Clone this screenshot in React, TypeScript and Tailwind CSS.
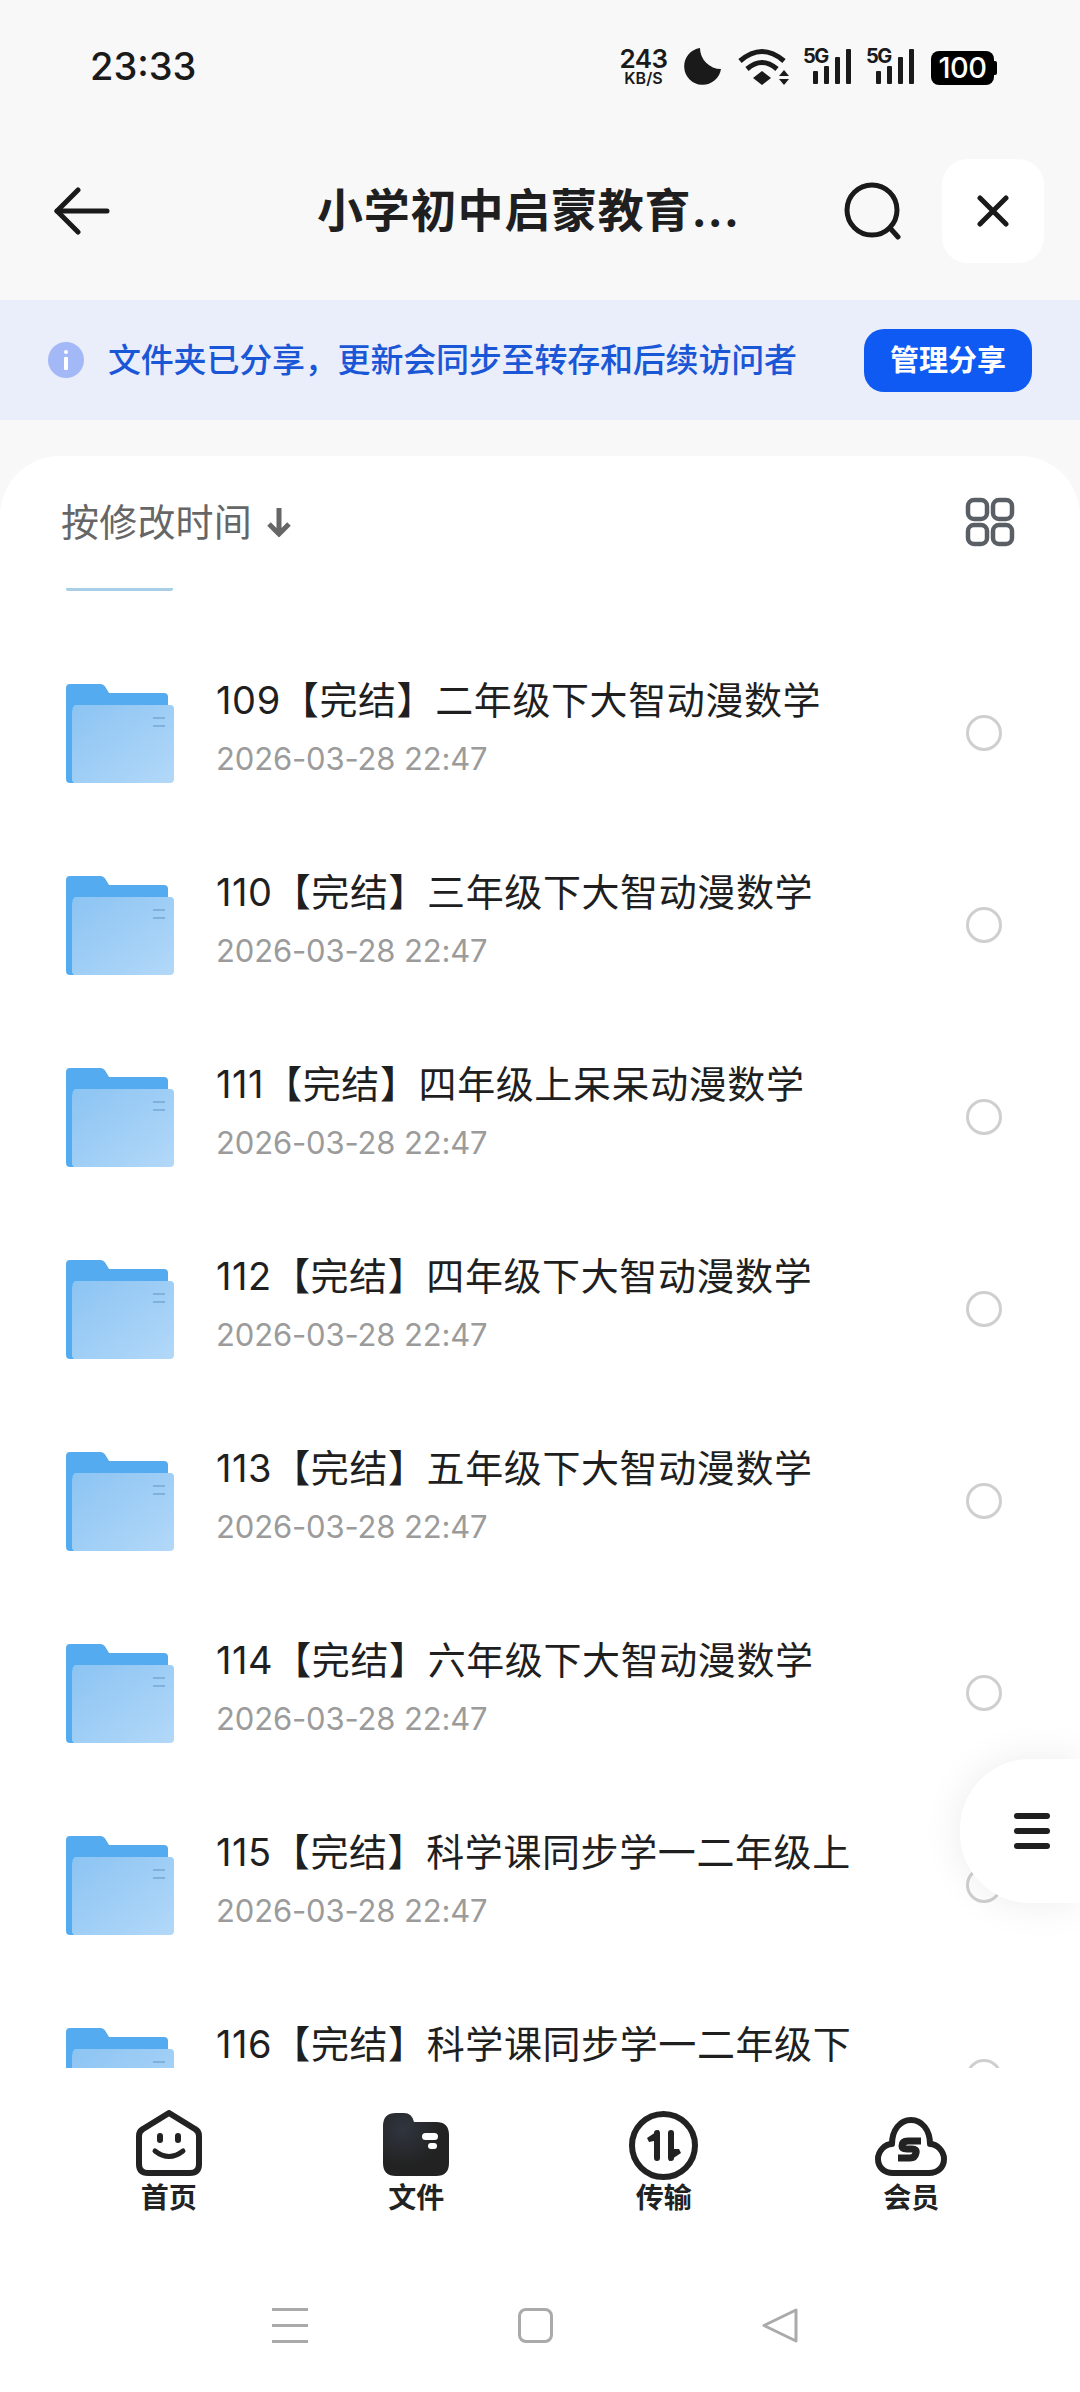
const rows = [
  { title: "109【完结】二年级下大智动漫数学" },
  { title: "110【完结】三年级下大智动漫数学" },
  { title: "111【完结】四年级上呆呆动漫数学" },
  { title: "112【完结】四年级下大智动漫数学" },
  { title: "113【完结】五年级下大智动漫数学" },
  { title: "114【完结】六年级下大智动漫数学" },
  { title: "115【完结】科学课同步学一二年级上" },
  { title: "116【完结】科学课同步学一二年级下" },
]

function FolderIcon({ id }: { id: number }) {
  return (
    <svg width="108" height="100" viewBox="0 0 108 100" className="shrink-0">
      <defs>
        <linearGradient id={`front-${id}`} x1="0" y1="0" x2="1" y2="1">
          <stop offset="0" stopColor="#8cc4f3" />
          <stop offset="1" stopColor="#b2d8f8" />
        </linearGradient>
      </defs>
      <path d="M4 0H34Q38 0 40 4L43 9H98Q102 9 102 13V30H8V99H4Q0 99 0 95V4Q0 0 4 0Z" fill="#55abf0" />
      <path d="M6 30Q6 21 10 21H104Q108 21 108 25V95Q108 99 104 99H10Q6 99 6 95Z" fill={`url(#front-${id})`} />
      <rect x="87" y="33" width="12" height="2" fill="#7fb0de" />
      <rect x="87" y="41" width="12" height="2" fill="#7fb0de" />
    </svg>
  )
}

function SignalIcon() {
  return (
    <div className="relative w-[48px] h-[37px]">
      <svg width="48" height="37" viewBox="0 0 48 37">
        <rect x="10" y="23" width="5" height="13" rx="1" fill="#1a1a1a" />
        <rect x="21" y="18" width="5" height="18" rx="1" fill="#1a1a1a" />
        <rect x="32" y="9" width="5" height="27" rx="1" fill="#1a1a1a" />
        <rect x="43" y="1" width="5" height="35" rx="1" fill="#1a1a1a" />
      </svg>
      <span className="absolute left-0 top-0 text-[20px] leading-[17px] font-bold tracking-[-1.5px] text-[#1a1a1a]">5G</span>
    </div>
  )
}

function StatusBar() {
  return (
    <div className="h-[130px] shrink-0 flex items-start justify-between pl-[90px] pr-[83px] pt-[48px] text-[#1a1a1a]">
      <span className="text-[38px] leading-[37px] font-medium">23:33</span>
      <div className="flex items-start">
        <div className="w-[47px] flex flex-col items-center font-semibold">
          <span className="text-[26px] leading-[22px] tracking-[-0.5px]">243</span>
          <span className="text-[16px] leading-[15px] mt-[1px]">KB/S</span>
        </div>
        <svg width="37" height="37" viewBox="0 0 37 37" className="ml-[17px]">
          <path d="M16 0A18.5 18.5 0 1 0 37 21A21 21 0 0 1 16 0Z" fill="#1a1a1a" />
        </svg>
        <svg width="51" height="37" viewBox="0 0 51 37" className="ml-[17px]" fill="none" stroke="#1a1a1a" strokeWidth="5">
          <path d="M2 13Q24 -6 46 13" />
          <path d="M9 21Q24 8 39 21" />
          <path d="M24 23L33 30L24 37L15 30Z" fill="#1a1a1a" stroke="none" />
          <path d="M46 22L51 28H41Z" fill="#1a1a1a" stroke="none" />
          <path d="M41 31H51L46 37Z" fill="#1a1a1a" stroke="none" />
        </svg>
        <div className="ml-[14px]"><SignalIcon /></div>
        <div className="ml-[15px]"><SignalIcon /></div>
        <div className="ml-[17px] mt-[3px] flex items-center">
          <div className="w-[63px] h-[34px] rounded-[8px] bg-black text-white text-[29px] leading-[34px] font-medium text-center tracking-[-0.5px]">100</div>
          <div className="w-[3px] h-[14px] rounded-r-[2px] bg-black" />
        </div>
      </div>
    </div>
  )
}

function Header() {
  return (
    <div className="h-[170px] shrink-0 flex items-center pl-[54px] pr-[36px] pb-[8px]">
      <svg width="56" height="48" viewBox="0 0 56 48" fill="none" stroke="#1a1a1a" strokeWidth="5" strokeLinecap="round" strokeLinejoin="round">
        <path d="M24 3L3 24L24 45" />
        <path d="M3 24H53" />
      </svg>
      <div className="ml-[207px] w-[430px] -mt-[2px] text-[46px] leading-[60px] font-bold text-[#1f1f1f] tracking-[0.8px] whitespace-nowrap">小学初中启蒙教育...</div>
      <svg width="58" height="58" viewBox="0 0 58 58" fill="none" stroke="#1a1a1a" strokeWidth="5" strokeLinecap="round" className="ml-[97px]">
        <circle cx="28" cy="28" r="25" />
        <path d="M46 46L54 55" />
      </svg>
      <div className="ml-[40px] w-[102px] h-[104px] rounded-[26px] bg-white flex items-center justify-center">
        <svg width="32" height="32" viewBox="0 0 32 32" fill="none" stroke="#1a1a1a" strokeWidth="5" strokeLinecap="round">
          <path d="M3 3L29 29M29 3L3 29" />
        </svg>
      </div>
    </div>
  )
}

function ShareBanner() {
  return (
    <div className="h-[120px] shrink-0 bg-[#eaeefb] flex items-center pl-[48px] pr-[48px]">
      <div className="w-[36px] h-[36px] rounded-full bg-[#a3b8f6] flex flex-col items-center justify-center gap-[3px]">
        <span className="w-[4px] h-[4px] bg-white rounded-full" />
        <span className="w-[4px] h-[13px] bg-white rounded-[1px]" />
      </div>
      <span className="ml-[24px] text-[33px] leading-[44px] font-medium tracking-[-0.2px] text-[#1a57d6] whitespace-nowrap">文件夹已分享，更新会同步至转存和后续访问者</span>
      <div className="ml-auto w-[168px] h-[63px] rounded-[20px] bg-[#0e5af2] text-white text-[29px] leading-[63px] font-bold text-center">管理分享</div>
    </div>
  )
}

function FileRow({ title, id }: { title: string; id: number }) {
  return (
    <div className="h-[192px] shrink-0 flex items-center pl-[66px] pr-[78px]">
      <FolderIcon id={id} />
      <div className="ml-[42px] flex-1 min-w-0 -mt-[13px]">
        <div className="text-[38px] leading-[50px] text-[#1f1f1f] whitespace-nowrap tracking-[0.6px]">{title}</div>
        <div className="mt-[13px] text-[31px] leading-[42px] tracking-[-0.15px] text-[#9b9b9b]">2026-03-28 22:47</div>
      </div>
      <div className="w-[36px] h-[36px] -mt-[3px] rounded-full border-[3px] border-[#cfcfcf] shrink-0" />
    </div>
  )
}

function HomeIcon() {
  return (
    <svg width="66" height="66" viewBox="0 0 66 66" fill="none" stroke="#222" strokeWidth="6" strokeLinecap="round" strokeLinejoin="round">
      <path d="M33 3L59 19Q63 21 63 26V54Q63 63 54 63H12Q3 63 3 54V26Q3 21 7 19Z" />
      <path d="M24 26V30M42 26V30" />
      <path d="M19 41Q33 52 47 41" strokeWidth="5" />
    </svg>
  )
}

function FilesIcon() {
  return (
    <svg width="66" height="63" viewBox="0 0 66 63">
      <defs>
        <radialGradient id="files-shine" cx="0.3" cy="0.25" r="0.6">
          <stop offset="0" stopColor="#30353f" />
          <stop offset="1" stopColor="#222222" />
        </radialGradient>
      </defs>
      <path d="M13 0H21Q29 0 31 9H53Q66 9 66 22V50Q66 63 53 63H13Q0 63 0 50V13Q0 0 13 0Z" fill="url(#files-shine)" />
      <rect x="39" y="20" width="16" height="7" rx="3.5" fill="#fff" />
      <rect x="45" y="30" width="9" height="6" rx="3" fill="#fff" />
    </svg>
  )
}

function TransferIcon() {
  return (
    <svg width="69" height="69" viewBox="0 0 69 69" fill="none" stroke="#222" className="-mb-[4px]">
      <circle cx="34.5" cy="34.5" r="31.5" strokeWidth="6" />
      <path d="M28 22V47M42 22V47" strokeWidth="6" strokeLinecap="round" />
      <path d="M30 19L18 27L20 31L30 29Z" fill="#222" stroke="none" />
      <path d="M40 50L52 42L50 38L40 38Z" fill="#222" stroke="none" />
    </svg>
  )
}

function CloudIcon() {
  return (
    <svg width="72" height="59" viewBox="0 0 72 59" fill="none" stroke="#222" strokeWidth="6" strokeLinejoin="round">
      <path d="M18 56H54C63 56 69 50 69 42C69 34 62 27 55 27C55 13 47 3 36 3C25 3 17 13 17 27C10 27 3 34 3 42C3 50 9 56 18 56Z" />
      <path d="M46 24H33Q27 24 27 29Q27 32 32 32H37Q42 32 41 36Q40 41 35 41H23" strokeWidth="7" />
    </svg>
  )
}

const tabs = [
  { label: "首页", icon: <HomeIcon /> },
  { label: "文件", icon: <FilesIcon /> },
  { label: "传输", icon: <TransferIcon /> },
  { label: "会员", icon: <CloudIcon /> },
]

function BottomTabs() {
  return (
    <div className="shrink-0 grid grid-cols-4 px-[45px] pt-[38px] bg-white">
      {tabs.map((tab) => (
        <div key={tab.label} className="flex flex-col items-center">
          <div className="h-[70px] flex items-end justify-center">{tab.icon}</div>
          <span className="mt-[8px] text-[28px] leading-[28px] font-semibold text-[#222]">{tab.label}</span>
        </div>
      ))}
    </div>
  )
}

function SystemNav() {
  return (
    <div className="shrink-0 flex items-start pl-[272px] pt-[96px] h-[180px] bg-white">
      <div className="w-[36px] h-[35px] flex flex-col justify-between">
        <div className="h-[3px] bg-[#aaaaaa]" />
        <div className="h-[3px] bg-[#aaaaaa]" />
        <div className="h-[3px] bg-[#aaaaaa]" />
      </div>
      <div className="ml-[210px] w-[35px] h-[35px] rounded-[8px] border-[3px] border-[#aaaaaa]" />
      <svg width="36" height="35" viewBox="0 0 36 35" fill="none" stroke="#aaaaaa" strokeWidth="3" strokeLinejoin="round" className="ml-[209px]">
        <path d="M34 2V33L2 17.5Z" />
      </svg>
    </div>
  )
}

export default function App() {
  return (
    <div className="relative w-[1080px] h-[2392px] overflow-hidden flex flex-col bg-[#f8f8f8] font-['Inter','Noto_Sans_CJK_SC',sans-serif]">
      <StatusBar />
      <Header />
      <ShareBanner />

      {/* sheet */}
      <div className="mt-[36px] flex-1 min-h-0 flex flex-col bg-white rounded-t-[60px]">
        <div className="h-[114px] shrink-0 flex items-center pl-[61px] pr-[65px] pt-[18px]">
          <span className="text-[38px] leading-[50px] tracking-[0.2px] text-[#666666]">按修改时间</span>
          <svg width="28" height="30" viewBox="0 0 28 30" fill="none" stroke="#666666" strokeWidth="5" className="ml-[13px]">
            <path d="M14 1V27M4 17L14 27L24 17" />
          </svg>
          <svg width="50" height="50" viewBox="0 0 50 50" fill="none" stroke="#5a5f66" strokeWidth="4.5" className="ml-auto">
            <rect x="3" y="3" width="19" height="19" rx="6" />
            <rect x="28" y="3" width="19" height="19" rx="6" />
            <rect x="3" y="28" width="19" height="19" rx="6" />
            <rect x="28" y="28" width="19" height="19" rx="6" />
          </svg>
        </div>

        <div className="flex-1 min-h-0 overflow-hidden flex flex-col">
          <div className="ml-[66px] mt-[18px] mb-[47px] w-[107px] h-[3px] shrink-0 bg-[#a9cfe8] rounded-b-[2px]" />
          {rows.map((row, index) => (
            <FileRow key={index} id={index} title={row.title} />
          ))}
        </div>

        <BottomTabs />
        <SystemNav />
      </div>

      {/* floating menu */}
      <div className="absolute right-0 top-[1759px] w-[120px] h-[144px] rounded-l-[70px] bg-white shadow-[0_0_40px_rgba(0,0,0,0.08)] flex flex-col justify-center gap-[9px] pl-[54px]">
        <div className="w-[36px] h-[6px] rounded-full bg-[#1f1f1f]" />
        <div className="w-[36px] h-[6px] rounded-full bg-[#1f1f1f]" />
        <div className="w-[36px] h-[6px] rounded-full bg-[#1f1f1f]" />
      </div>
    </div>
  )
}
